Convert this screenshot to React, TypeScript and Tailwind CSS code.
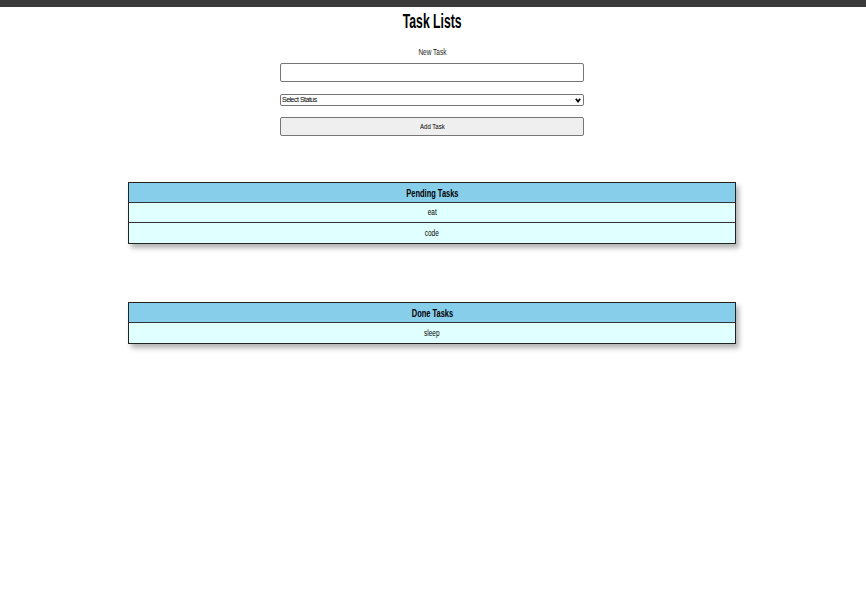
const font = { fontFamily: '"Liberation Sans", Arial, sans-serif' };

interface TaskTableProps {
  title: string;
  tasks: string[];
}

const TaskTable = ({ title, tasks }: TaskTableProps) => {
  return (
    <div className="w-[608px] mx-auto border border-[#222] shadow-[3px_4px_5px_rgba(0,0,0,0.3)]">
      <div className="h-[20px] pt-[2px] flex items-center justify-center bg-[#87ceeb] text-[11px] font-bold text-black border-b border-[#333]">
        <span className="inline-block scale-x-[0.68]">{title}</span>
      </div>
      {tasks.map((t, i) => (
        <div
          key={t}
          className={`h-[20px] pt-[1px] flex items-center justify-center bg-[#e0ffff] text-[9px] text-black ${
            i < tasks.length - 1 ? "border-b border-[#333]" : ""
          }`}
        >
          <span className="inline-block scale-x-[0.72]">{t}</span>
        </div>
      ))}
    </div>
  );
};

export default function App() {
  return (
    <div className="min-h-screen bg-white pr-[2px]" style={font}>
      <div className="h-[7px] bg-[#3a3a3a] -mr-[2px]" />
      <h1 className="mt-[3px] text-center text-[20px] leading-[22px] font-bold text-black">
        <span className="inline-block scale-x-[0.61]">Task Lists</span>
      </h1>
      <div className="w-[304px] mx-auto flex flex-col items-center">
        <label className="mt-[14px] text-[9px] leading-[12px] text-[#222]">
          <span className="inline-block scale-x-[0.72]">New Task</span>
        </label>
        <input className="mt-[5px] w-full h-[19px] border border-[#767676] rounded-[2px] bg-white" />
        <div className="relative mt-[12px] w-full">
          <select className="appearance-none block w-full h-[12px] border border-[#767676] rounded-[2px] bg-white text-[7px] leading-[10px] pl-[1px] pr-[10px] py-0 tracking-[-0.5px] text-black">
            <option>Select Status</option>
          </select>
          <svg
            className="absolute right-[3px] top-[4px] pointer-events-none"
            width="6"
            height="5"
            viewBox="0 0 6 5"
          >
            <path d="M0.8 0.8 L3 3.6 L5.2 0.8" fill="none" stroke="#000" strokeWidth="1.6" />
          </svg>
        </div>
        <button className="mt-[11px] w-full h-[19px] border border-[#767676] rounded-[2px] bg-[#efefef] text-[8px] text-black">
          <span className="inline-block scale-x-[0.75]">Add Task</span>
        </button>
      </div>
      <div className="mt-[46px]">
        <TaskTable title="Pending Tasks" tasks={["eat", "code"]} />
      </div>
      <div className="mt-[58px]">
        <TaskTable title="Done Tasks" tasks={["sleep"]} />
      </div>
    </div>
  );
}
